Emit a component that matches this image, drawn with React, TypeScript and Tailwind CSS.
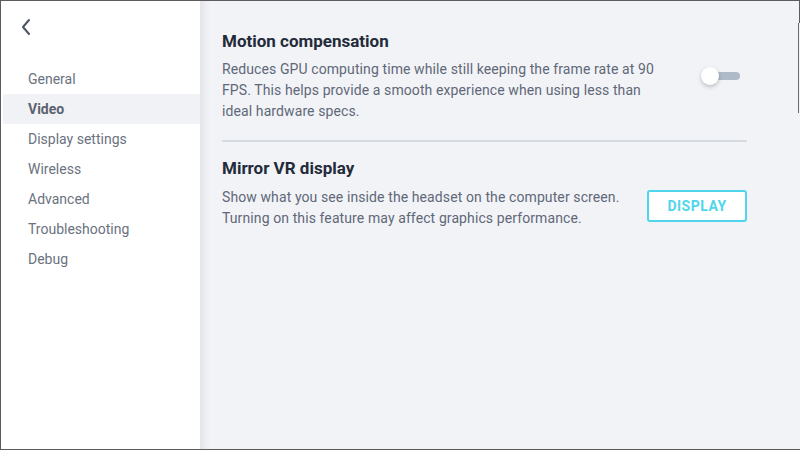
import React from "react";

const navItems = ["General", "Video", "Display settings", "Wireless", "Advanced", "Troubleshooting", "Debug"];

export default function App() {
  return (
    <div className="relative flex w-[800px] h-[450px] overflow-hidden border-l border-t border-b border-[#5c5c5c] bg-[#f2f3f7] font-['Roboto',sans-serif]">
      <aside className="w-[199px] shrink-0 bg-white pl-[2px] pt-[14px] z-10">
        <div className="pl-[16px] h-[24px] flex items-center">
          <svg width="14" height="20" viewBox="0 0 14 20" fill="none">
            <path d="M10 3 L4 10 L10 17" stroke="#4b5563" strokeWidth="2" strokeLinecap="round" strokeLinejoin="round" />
          </svg>
        </div>
        <nav className="mt-[25px] flex flex-col">
          {navItems.map((item) => (
            <div
              key={item}
              className={
                item === "Video"
                  ? "h-[30px] flex items-center pl-[25px] text-[14px] font-bold text-[#5b6270] bg-[#f1f2f6]"
                  : "h-[30px] flex items-center pl-[25px] text-[14px] text-[#6b7280]"
              }
            >
              {item}
            </div>
          ))}
        </nav>
      </aside>
      <main className="relative flex-1 pl-[22px] pr-[53px] pt-[28px] shadow-[inset_9px_0_8px_-6px_rgba(0,0,0,0.08)]">
        <section>
          <h2 className="text-[17px] leading-[24px] font-bold text-[#232b3a]">Motion compensation</h2>
          <div className="mt-[6px] flex items-start justify-between">
            <p className="w-[445px] text-[14px] leading-[21px] tracking-[0.1px] text-[#5f6877]">
              Reduces GPU computing time while still keeping the frame rate at 90 FPS. This helps provide a smooth experience when using less than ideal hardware specs.
            </p>
            <div className="relative mt-[7px] mr-[7px] w-[39px] h-[20px]">
              <div className="absolute left-[8px] right-0 top-[6px] h-[8px] rounded-full bg-[#afbac8]" />
              <div className="absolute left-0 top-[1px] w-[18px] h-[18px] rounded-full bg-white shadow-[0_2px_4px_rgba(0,0,0,0.22)]" />
            </div>
          </div>
        </section>
        <div className="mt-[18px] h-[2px] bg-[#d6dae1]" />
        <section className="mt-[14px]">
          <h2 className="text-[17px] leading-[24px] font-bold text-[#232b3a]">Mirror VR display</h2>
          <div className="mt-[7px] flex items-start justify-between">
            <p className="w-[420px] text-[14px] leading-[21px] tracking-[0.1px] text-[#5f6877]">
              Show what you see inside the headset on the computer screen. Turning on this feature may affect graphics performance.
            </p>
            <button className="mt-[3px] w-[100px] h-[32px] rounded-[3px] border-2 border-[#4fd6ec] bg-white text-[14px] font-bold tracking-[0.5px] text-[#4fd6ec]">
              DISPLAY
            </button>
          </div>
        </section>
      </main>
      <div className="absolute right-0 top-0 w-[1px] h-[22px] bg-[#5c5c5c]" />
      <div className="absolute right-[1px] top-[22px] w-[1px] h-[90px] bg-[#6b6b6b]" />
    </div>
  );
}
